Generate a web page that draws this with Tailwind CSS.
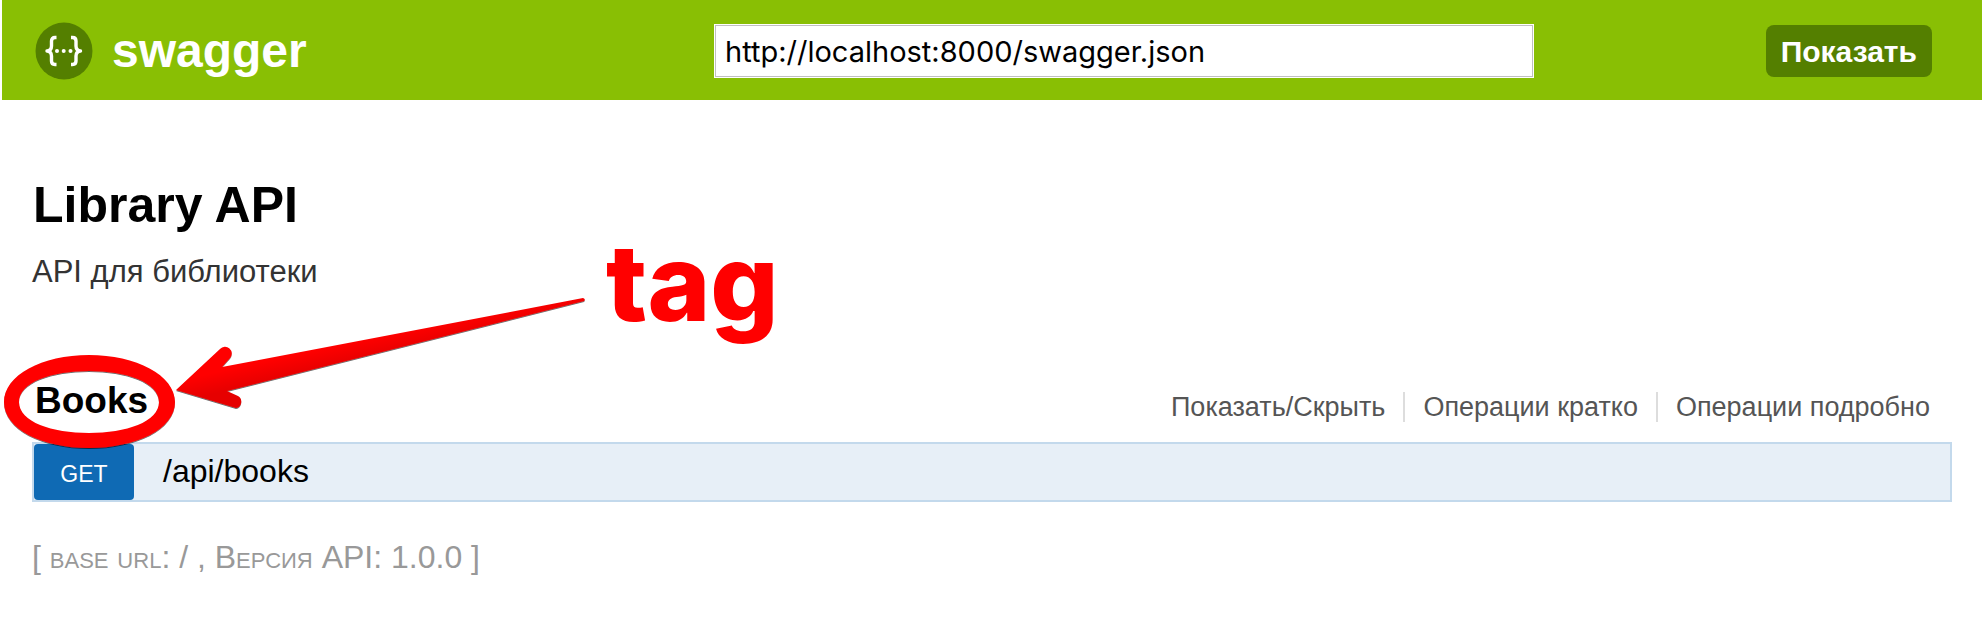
<!DOCTYPE html>
<html lang="ru">
<head>
<meta charset="utf-8">
<title>Library API</title>
<script src="https://cdn.jsdelivr.net/npm/@tailwindcss/browser@4"></script>
</head>
<body class="relative bg-white font-['Liberation_Sans',Arial,sans-serif] text-black">
  <header class="ml-[2px] flex h-[100px] items-center bg-[#89bf04] pt-[2px] pl-[33px] pr-[50px]">
    <a href="#" class="flex flex-1 items-center gap-[19px] text-5xl font-bold text-white">
      <svg class="size-[58px]" viewBox="0 0 58 58" fill="none" aria-hidden="true">
        <circle cx="29" cy="29" r="28.5" fill="#547f00"/>
        <g stroke="#fff" stroke-width="3.4" stroke-linejoin="round">
          <path d="M21.5 15.500h-1.500q-3.500 0-3.500 3.500v5q0 4.500-4.500 5q4.500.5 4.500 5v5q0 3.500 3.500 3.500h1.500"/>
          <path d="M36 15.500h1.500q3.500 0 3.500 3.500v5q0 4.500 4.500 5q-4.500.5-4.500 5v5q0 3.500-3.500 3.500h-1.500"/>
        </g>
        <g fill="#fff"><circle cx="22" cy="29" r="2"/><circle cx="28.700" cy="29" r="2"/><circle cx="35.500" cy="29" r="2"/></g>
      </svg>
      <span>swagger</span>
    </a>
    <input type="text" aria-label="URL" value="http://localhost:8000/swagger.json" class="h-[52px] w-[818px] border border-[#c0c0c0] bg-white px-[9px] font-['Inter',sans-serif] text-[29px] ring-1 ring-white">
    <div class="flex w-[399px] justify-end">
      <button type="button" class="h-[52px] rounded-lg bg-[#547f00] px-[15px] text-[30px] font-bold text-white">Показать</button>
    </div>
  </header>

  <main class="pr-[30px] pl-8">
    <h1 class="pt-[77px] pl-px text-[50px] leading-[56px] font-bold">Library API</h1>
    <p class="mt-[23px] text-[31px] leading-8 text-[#333]">API для библиотеки</p>

    <section class="mt-[92px]">
      <div class="flex h-[62px] items-start justify-between pr-[22px]">
        <h2 class="pt-px pl-[3px] text-[37px] leading-10 font-bold"><a href="#books">Books</a></h2>
        <nav class="mt-3 flex text-[27px] leading-[30px] text-[#555]">
          <a href="#toggle" class="pr-[18px]">Показать/Скрыть</a>
          <a href="#list" class="border-l-2 border-[#ddd] px-[18px]">Операции кратко</a>
          <a href="#expand" class="border-l-2 border-[#ddd] pl-[18px]">Операции подробно</a>
        </nav>
      </div>
      <div class="flex h-[60px] items-center gap-[29px] border-2 border-[#c3d9ec] bg-[#e7eff7]">
        <a href="#get" class="flex h-full w-[100px] items-center justify-center rounded bg-[#0f6ab4] pt-1 text-[23px] text-white">GET</a>
        <a href="#get" class="pb-[2px] text-[32px]">/api/books</a>
      </div>
    </section>

    <footer class="mt-[35px] text-[32px] leading-10 text-[#999] [font-variant:small-caps]">[ base url: / , Версия API: 1.0.0 ]</footer>
  </main>

  <svg class="pointer-events-none absolute top-0 left-0 h-[618px] w-[800px]" viewBox="0 0 800 618" aria-hidden="true">
    <defs>
      <linearGradient id="red" gradientUnits="userSpaceOnUse" x1="370" y1="325" x2="379" y2="365">
        <stop offset="0.300" stop-color="#f00"/><stop offset="0.800" stop-color="#e60000"/>
      </linearGradient>
      <filter id="shade" x="-10%" y="-10%" width="120%" height="120%">
        <feDropShadow dx="0" dy="1" stdDeviation="0.600" flood-color="#000" flood-opacity="0.600"/>
      </filter>
    </defs>
    <g filter="url(#shade)">
      <path fill="#f00" fill-rule="evenodd" d="M89 355C136 355 175 375 175 402C175 429 136 448 89 448C42 448 4 429 4 402C4 375 42 355 89 355ZM89 371C52 371 19 382 19 402C19 422 52 433 89 433C126 433 159 422 159 402C159 382 126 371 89 371Z"/>
      <path fill="url(#red)" d="M176 390L220 349A6.500 6.500 0 0 1 230 358L222 367L583 298Q586 299 584 301L227 391L238 396A6.500 6.500 0 0 1 236 408Z"/>
    </g>
  </svg>
  <span class="absolute top-[219px] left-[606px] font-['Inter',sans-serif] text-[107px] leading-[126px] font-extrabold text-[#f00]">tag</span>
</body>
</html>
